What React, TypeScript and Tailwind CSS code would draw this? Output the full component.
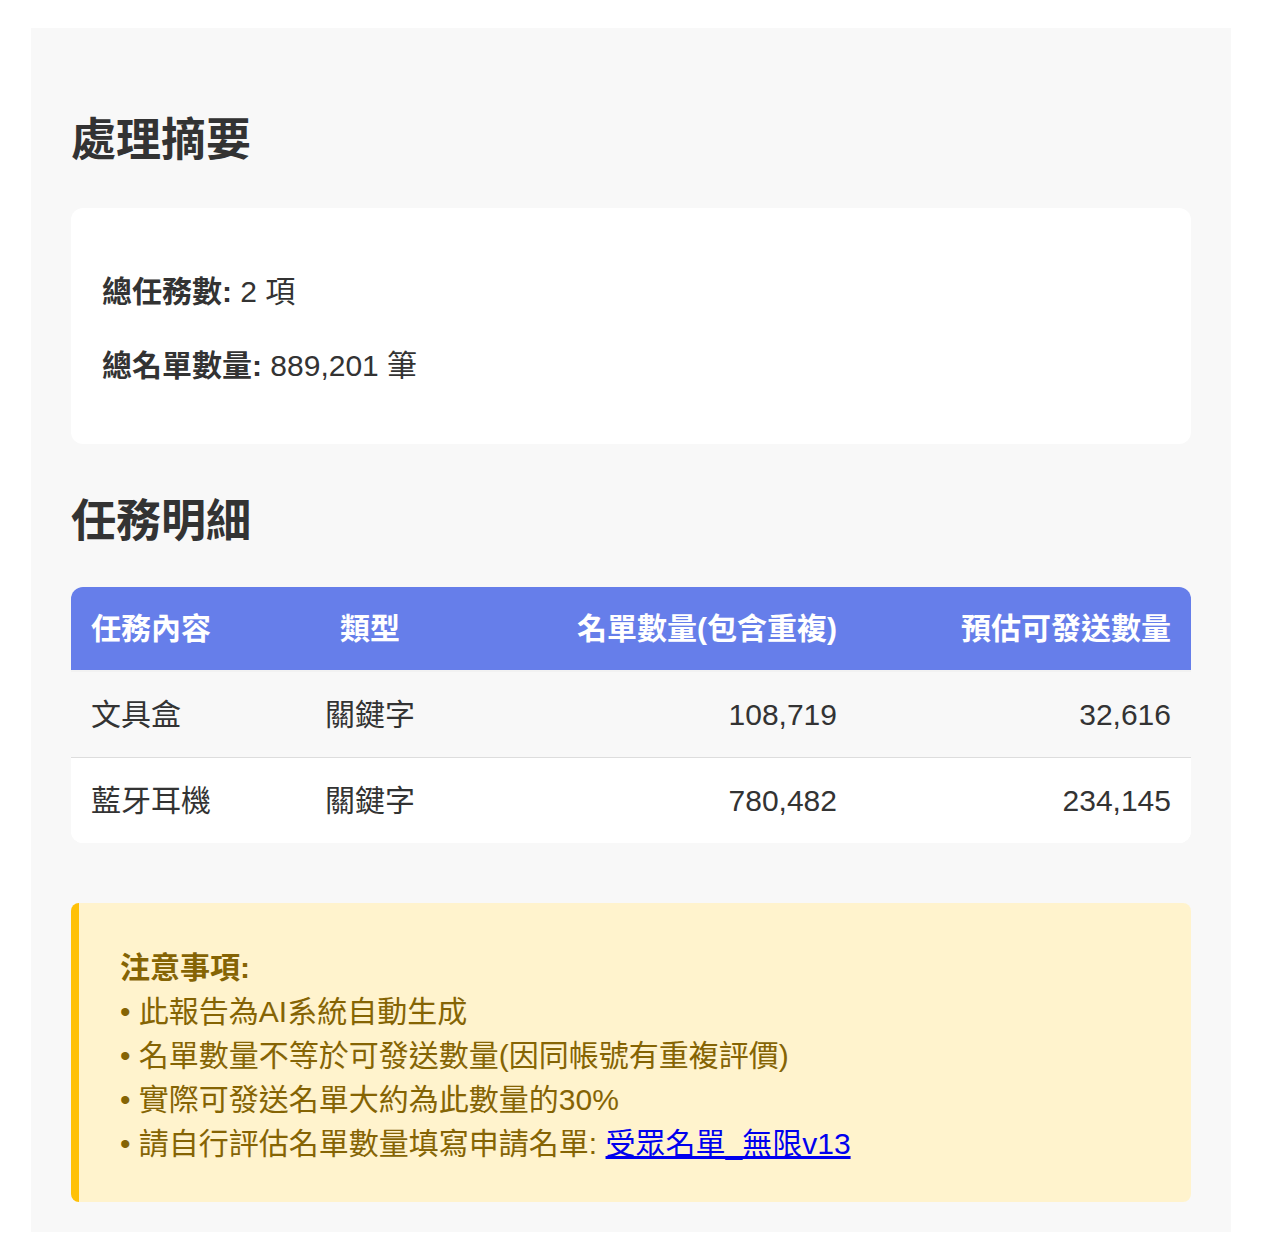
import React from "react";

const rows = [
  { name: "文具盒", type: "關鍵字", total: "108,719", sendable: "32,616" },
  { name: "藍牙耳機", type: "關鍵字", total: "780,482", sendable: "234,145" },
];

const notes = [
  "此報告為AI系統自動生成",
  "名單數量不等於可發送數量(因同帳號有重複評價)",
  "實際可發送名單大約為此數量的30%",
];

const App: React.FC = () => {
  return (
    <div
      className="min-h-[1260px] bg-white pt-[28px] pl-[31px]"
      style={{ fontFamily: '"Liberation Sans", Arial, "Noto Sans CJK TC", sans-serif' }}
    >
      <div className="w-[1200px] bg-[#f8f8f8] px-[40px] pt-[86px] pb-[30px] text-[#333]">
        {/* Summary */}
        <h2 className="text-[45px] font-bold leading-[53px] text-[#333]">處理摘要</h2>
        <div className="mt-[41px] flex flex-col gap-[31px] rounded-[12px] bg-white px-[31px] pt-[62px] pb-[57px] text-[30px] leading-[43px] text-[#333]">
          <p>
            <span className="font-bold">總任務數:</span> 2 項
          </p>
          <p>
            <span className="font-bold">總名單數量:</span> 889,201 筆
          </p>
        </div>

        {/* Detail */}
        <h2 className="mt-[51px] text-[45px] font-bold leading-[53px] text-[#333]">任務明細</h2>
        <div className="mt-[39px] overflow-hidden rounded-[12px] bg-white">
          <table className="w-full table-fixed border-collapse text-[30px] leading-[43px]">
            <colgroup>
              <col className="w-[208px]" />
              <col className="w-[182px]" />
              <col className="w-[396px]" />
              <col className="w-[334px]" />
            </colgroup>
            <thead>
              <tr className="bg-[#667eea] text-white">
                <th className="px-[20px] py-[20px] text-left font-bold">任務內容</th>
                <th className="px-[20px] py-[20px] text-center font-bold">類型</th>
                <th className="px-[20px] py-[20px] text-right font-bold">名單數量(包含重複)</th>
                <th className="px-[20px] py-[20px] text-right font-bold">預估可發送數量</th>
              </tr>
            </thead>
            <tbody>
              {rows.map((r, i) => (
                <tr
                  key={r.name}
                  className={
                    i === 0
                      ? "border-t-2 border-b border-t-[#f2f2f2] border-b-[#dddddd] bg-[#f8f8f8]"
                      : "bg-white"
                  }
                >
                  <td className="px-[20px] py-[21px] text-left">{r.name}</td>
                  <td className="px-[20px] py-[21px] text-center">{r.type}</td>
                  <td className="px-[20px] py-[21px] text-right">{r.total}</td>
                  <td className="px-[20px] py-[21px] text-right">{r.sendable}</td>
                </tr>
              ))}
            </tbody>
          </table>
        </div>

        {/* Notice */}
        <div className="mt-[60px] rounded-[8px] border-l-[8px] border-[#ffc107] bg-[#fff3cd] pl-[41px] pr-[40px] pt-[43px] pb-[36px] text-[30px] leading-[44px] text-[#856404]">
          <p className="font-bold">注意事項:</p>
          {notes.map((n) => (
            <p key={n}>• {n}</p>
          ))}
          <p>
            • 請自行評估名單數量填寫申請名單:{" "}
            <a href="#" className="text-[#0000ee] underline">
              受眾名單_無限v13
            </a>
          </p>
        </div>
      </div>
    </div>
  );
};

export default App;
